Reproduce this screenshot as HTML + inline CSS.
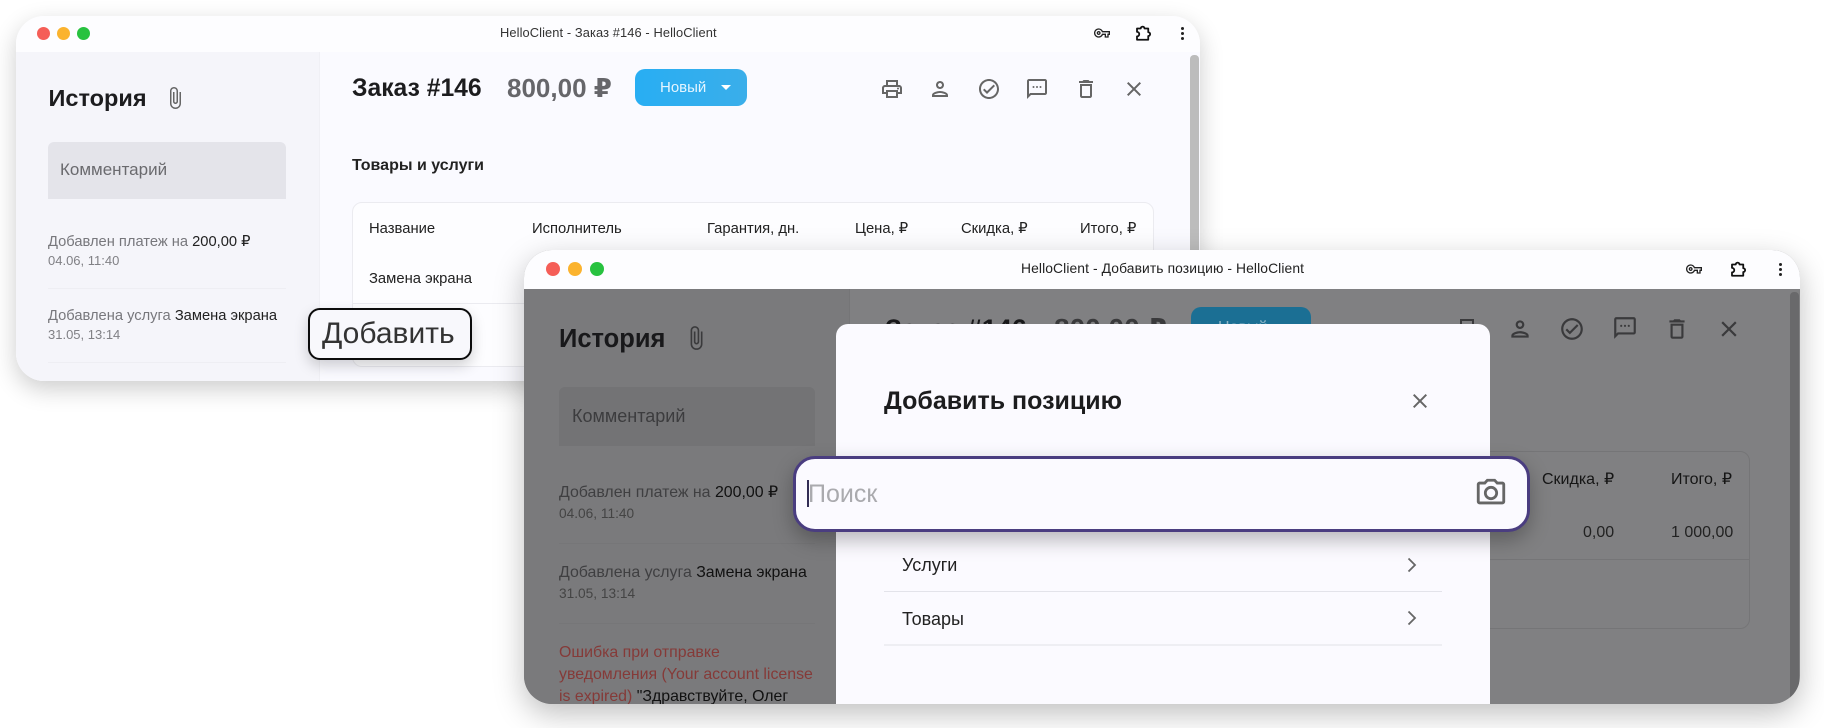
<!DOCTYPE html>
<html lang="ru">
<head>
<meta charset="utf-8">
<title>HelloClient</title>
<style>
html,body{margin:0;padding:0;background:#fff}
body{width:1824px;height:728px;overflow:hidden;position:relative;font-family:"Liberation Sans","DejaVu Sans",sans-serif}
.l{position:absolute;left:0;top:0;width:1824px;height:728px}
.b{position:absolute;box-sizing:border-box}
.t{position:absolute;white-space:nowrap;line-height:20px;height:20px}
svg{position:absolute;overflow:visible}
.w1{clip-path:inset(16px 624px 347px 16px round 28px)}
.w2{clip-path:inset(250px 24px 24px 524px round 28px)}
.s1{font-size:14.8px;color:#222}
.h2{font-size:16px;color:#151515}
</style>
</head>
<body>

<!-- window 1 -->
<div class="b" style="left:16px;top:16px;width:1184px;height:365px;border-radius:28px;box-shadow:0 8px 24px rgba(0,0,0,.2)"></div>
<div class="l w1">
  <div class="b" style="left:16px;top:16px;width:1184px;height:365px;background:#fafaff"></div>
  <div class="b" style="left:16px;top:16px;width:1184px;height:36px;background:#fdfdff"></div>
  <div class="b" style="left:16px;top:52px;width:304px;height:329px;background:#f5f5fa;border-right:1px solid #f0f0f5"></div>
  <div class="b" style="left:37px;top:26.5px;width:13px;height:13px;border-radius:50%;background:#f55e57"></div>
  <div class="b" style="left:57px;top:26.5px;width:13px;height:13px;border-radius:50%;background:#fbb32e"></div>
  <div class="b" style="left:77px;top:26.5px;width:13px;height:13px;border-radius:50%;background:#28c23f"></div>
  <div class="t" style="left:500px;top:23px;font-size:12.85px;color:#333;letter-spacing:.1px">HelloClient - Заказ #146 - HelloClient</div>
  <!-- chrome icons -->
  <svg style="left:1094px;top:25px" width="16" height="16" viewBox="0 0 24 24" fill="#222"><path d="M22 19h-6v-4h-2.68c-1.14 2.42-3.6 4-6.32 4-3.86 0-7-3.14-7-7s3.14-7 7-7c2.72 0 5.17 1.58 6.32 4H24v6h-2v4zm-4-2h2v-4h2v-2H11.94l-.23-.67C11.01 8.34 9.11 7 7 7c-2.76 0-5 2.24-5 5s2.24 5 5 5c2.11 0 4.01-1.34 4.71-3.33l.23-.67H18v4zM7 15c-1.65 0-3-1.35-3-3s1.35-3 3-3 3 1.35 3 3-1.35 3-3 3zm0-4c-.55 0-1 .45-1 1s.45 1 1 1 1-.45 1-1-.45-1-1-1z"/></svg>
  <svg style="left:1134px;top:24px" width="18" height="18" viewBox="0 0 24 24" fill="none" stroke="#111" stroke-width="2.4" stroke-linejoin="round"><path d="M4 6h5a2.5 2.5 0 0 1 5 0h5v5a2.5 2.5 0 0 1 0 5v5H4v-4.5a3 3 0 0 0 0-6z"/></svg>
  <div class="b" style="left:1181px;top:27px;width:3px;height:3px;border-radius:50%;background:#222"></div>
  <div class="b" style="left:1181px;top:32px;width:3px;height:3px;border-radius:50%;background:#222"></div>
  <div class="b" style="left:1181px;top:37px;width:3px;height:3px;border-radius:50%;background:#222"></div>
  <!-- sidebar -->
  <div class="t" style="left:48.5px;top:88px;font-size:23.5px;font-weight:700;color:#1c1c1e;line-height:20px">История</div>
  <svg style="left:163px;top:86px" width="24" height="24" viewBox="0 0 24 24" fill="#666"><path d="M16.5 6v11.5c0 2.21-1.79 4-4 4s-4-1.79-4-4V5c0-1.38 1.12-2.5 2.5-2.5s2.5 1.12 2.5 2.5v10.5c0 .55-.45 1-1 1s-1-.45-1-1V6H10v9.5c0 1.38 1.12 2.5 2.5 2.5s2.5-1.12 2.5-2.5V5c0-2.21-1.79-4-4-4S7 2.79 7 5v12.5c0 3.04 2.46 5.5 5.5 5.5s5.5-2.46 5.5-5.5V6h-1.5z"/></svg>
  <div class="b" style="left:48px;top:142px;width:238px;height:57px;background:#e4e4ea;border-radius:6px 6px 0 0"></div>
  <div class="t" style="left:60px;top:160px;font-size:17px;color:#6a6a6e">Комментарий</div>
  <div class="t" style="left:48px;top:232px;font-size:14.7px;color:#77777c">Добавлен платеж на <span style="color:#222">200,00 ₽</span></div>
  <div class="t" style="left:48px;top:251px;font-size:13px;color:#808085">04.06, 11:40</div>
  <div class="b" style="left:48px;top:288px;width:238px;height:1px;background:#eeeef3"></div>
  <div class="t" style="left:48px;top:306px;font-size:14.7px;color:#77777c">Добавлена услуга <span style="color:#222">Замена экрана</span></div>
  <div class="t" style="left:48px;top:325px;font-size:13px;color:#808085">31.05, 13:14</div>
  <div class="b" style="left:48px;top:362px;width:238px;height:1px;background:#eeeef3"></div>
  <!-- main -->
  <div class="t" style="left:352px;top:79px;font-size:24.7px;font-weight:700;color:#1c1c1e">Заказ #146</div>
  <div class="t" style="left:507px;top:78px;font-size:26px;font-weight:700;color:#66666a">800,00 ₽</div>
  <div class="b" style="left:635px;top:69px;width:112px;height:37px;border-radius:10px;background:linear-gradient(90deg,#28aef3,#3aaeea)"></div>
  <div class="t" style="left:660px;top:77.5px;font-size:15px;color:#e4f5ff">Новый</div>
  <div class="b" style="left:721px;top:85px;width:0;height:0;border-left:5px solid transparent;border-right:5px solid transparent;border-top:5px solid #fff"></div>
  <svg style="left:880px;top:77px" width="24" height="24" viewBox="0 0 24 24" fill="#666"><path d="M19 8h-1V3H6v5H5c-1.66 0-3 1.34-3 3v6h4v4h12v-4h4v-6c0-1.66-1.34-3-3-3zM8 5h8v3H8V5zm8 12v2H8v-4h8v2zm2-2v-2H6v2H4v-4c0-.55.45-1 1-1h14c.55 0 1 .45 1 1v4h-2z"/><circle cx="18" cy="11.5" r="1"/></svg>
  <svg style="left:928px;top:77px" width="24" height="24" viewBox="0 0 24 24" fill="#666"><path d="M12 6c1.1 0 2 .9 2 2s-.9 2-2 2-2-.9-2-2 .9-2 2-2m0 10c2.7 0 5.8 1.29 6 2H6c.23-.72 3.31-2 6-2m0-12C9.79 4 8 5.79 8 8s1.79 4 4 4 4-1.79 4-4-1.79-4-4-4zm0 10c-2.67 0-8 1.34-8 4v2h16v-2c0-2.66-5.33-4-8-4z"/></svg>
  <svg style="left:977px;top:77px" width="24" height="24" viewBox="0 0 24 24" fill="#666"><path d="M12 2C6.48 2 2 6.48 2 12s4.48 10 10 10 10-4.48 10-10S17.52 2 12 2zm0 18c-4.41 0-8-3.59-8-8s3.59-8 8-8 8 3.59 8 8-3.59 8-8 8zm4.59-12.42L10 14.17l-2.59-2.58L6 13l4 4 8-8z"/></svg>
  <svg style="left:1025px;top:77px" width="24" height="24" viewBox="0 0 24 24" fill="#666"><path d="M20 2H4c-1.1 0-2 .9-2 2v18l4-4h14c1.1 0 2-.9 2-2V4c0-1.1-.9-2-2-2zm0 14H5.17L4 17.17V4h16v12z"/><circle cx="8.5" cy="10" r="1"/><circle cx="12" cy="10" r="1"/><circle cx="15.5" cy="10" r="1"/></svg>
  <svg style="left:1074px;top:77px" width="24" height="24" viewBox="0 0 24 24" fill="#666"><path d="M6 19c0 1.1.9 2 2 2h8c1.1 0 2-.9 2-2V7H6v12zM8 9h8v10H8V9zm7.5-5l-1-1h-5l-1 1H5v2h14V4z"/></svg>
  <svg style="left:1122px;top:77px" width="24" height="24" viewBox="0 0 24 24" fill="#666"><path d="M19 6.41L17.59 5 12 10.59 6.41 5 5 6.41 10.59 12 5 17.59 6.41 19 12 13.41 17.59 19 19 17.59 13.41 12z"/></svg>
  <div class="b" style="left:1190px;top:55px;width:9px;height:326px;border-radius:4px 4px 0 0;background:#bcbcbc"></div>
  <div class="t" style="left:352px;top:156px;font-size:16px;font-weight:700;color:#222">Товары и услуги</div>
  <div class="b" style="left:352px;top:202px;width:802px;height:165px;border:1px solid #ebebf0;border-radius:10px;background:#fdfdff"></div>
  <div class="t s1" style="left:369px;top:219px">Название</div>
  <div class="t s1" style="left:532px;top:219px">Исполнитель</div>
  <div class="t s1" style="left:707px;top:219px">Гарантия, дн.</div>
  <div class="t s1" style="left:855px;top:219px">Цена, ₽</div>
  <div class="t s1" style="left:961px;top:219px">Скидка, ₽</div>
  <div class="t s1" style="left:1080px;top:219px">Итого, ₽</div>
  <div class="t s1" style="left:369px;top:269px">Замена экрана</div>
  <div class="b" style="left:352px;top:303px;width:802px;height:1px;background:#ebebf0"></div>
</div>

<!-- tooltip -->
<div class="b" style="left:308px;top:308px;width:164px;height:52px;border:2px solid #0c0c0c;border-radius:12px;background:#f8f8fc;box-shadow:0 6px 14px rgba(0,0,0,.18)"></div>
<div class="t" style="left:322px;top:314px;height:40px;line-height:40px;font-size:30px;color:#333">Добавить</div>

<!-- window 2 -->
<div class="b" style="left:524px;top:250px;width:1276px;height:454px;border-radius:28px;box-shadow:0 10px 30px rgba(0,0,0,.25)"></div>
<div class="l w2">
  <div class="b" style="left:524px;top:250px;width:1276px;height:454px;background:#808082"></div>
  <div class="b" style="left:524px;top:250px;width:1276px;height:39px;background:#fdfdff"></div>
  <div class="b" style="left:524px;top:289px;width:326px;height:415px;background:#7a7a7c;border-right:1px solid #757577"></div>
  <div class="b" style="left:546px;top:261.5px;width:14px;height:14px;border-radius:50%;background:#f55e57"></div>
  <div class="b" style="left:568px;top:261.5px;width:14px;height:14px;border-radius:50%;background:#fbb32e"></div>
  <div class="b" style="left:590px;top:261.5px;width:14px;height:14px;border-radius:50%;background:#28c23f"></div>
  <div class="t" style="left:1021px;top:258px;font-size:13.85px;color:#222;letter-spacing:.1px">HelloClient - Добавить позицию - HelloClient</div>
  <svg style="left:1686px;top:261px" width="16" height="16" viewBox="0 0 24 24" fill="#222"><path d="M22 19h-6v-4h-2.68c-1.14 2.42-3.6 4-6.32 4-3.86 0-7-3.14-7-7s3.14-7 7-7c2.72 0 5.17 1.58 6.32 4H24v6h-2v4zm-4-2h2v-4h2v-2H11.94l-.23-.67C11.01 8.34 9.11 7 7 7c-2.76 0-5 2.24-5 5s2.24 5 5 5c2.11 0 4.01-1.34 4.71-3.33l.23-.67H18v4zM7 15c-1.65 0-3-1.35-3-3s1.35-3 3-3 3 1.35 3 3-1.35 3-3 3zm0-4c-.55 0-1 .45-1 1s.45 1 1 1 1-.45 1-1-.45-1-1-1z"/></svg>
  <svg style="left:1729px;top:260px" width="18" height="18" viewBox="0 0 24 24" fill="none" stroke="#111" stroke-width="2.4" stroke-linejoin="round"><path d="M4 6h5a2.5 2.5 0 0 1 5 0h5v5a2.5 2.5 0 0 1 0 5v5H4v-4.5a3 3 0 0 0 0-6z"/></svg>
  <div class="b" style="left:1779px;top:263px;width:3px;height:3px;border-radius:50%;background:#222"></div>
  <div class="b" style="left:1779px;top:268px;width:3px;height:3px;border-radius:50%;background:#222"></div>
  <div class="b" style="left:1779px;top:273px;width:3px;height:3px;border-radius:50%;background:#222"></div>
  <!-- sidebar -->
  <div class="t" style="left:559px;top:329px;font-size:25.5px;font-weight:700;color:#18181a">История</div>
  <svg style="left:683px;top:325px" width="26" height="26" viewBox="0 0 24 24" fill="#3a3a3c"><path d="M16.5 6v11.5c0 2.21-1.79 4-4 4s-4-1.79-4-4V5c0-1.38 1.12-2.5 2.5-2.5s2.5 1.12 2.5 2.5v10.5c0 .55-.45 1-1 1s-1-.45-1-1V6H10v9.5c0 1.38 1.12 2.5 2.5 2.5s2.5-1.12 2.5-2.5V5c0-2.21-1.79-4-4-4S7 2.79 7 5v12.5c0 3.04 2.46 5.5 5.5 5.5s5.5-2.46 5.5-5.5V6h-1.5z"/></svg>
  <div class="b" style="left:559px;top:387px;width:256px;height:59px;background:#737375;border-radius:6px 6px 0 0"></div>
  <div class="t" style="left:572px;top:406px;font-size:18px;color:#3c3c3e">Комментарий</div>
  <div class="t" style="left:559px;top:483px;font-size:15.9px;color:#3f3f41">Добавлен платеж на <span style="color:#111">200,00 ₽</span></div>
  <div class="t" style="left:559px;top:504px;font-size:13.7px;color:#444">04.06, 11:40</div>
  <div class="b" style="left:559px;top:543px;width:256px;height:1px;background:#767678"></div>
  <div class="t" style="left:559px;top:563px;font-size:15.9px;color:#3f3f41">Добавлена услуга <span style="color:#111">Замена экрана</span></div>
  <div class="t" style="left:559px;top:584px;font-size:13.7px;color:#444">31.05, 13:14</div>
  <div class="b" style="left:559px;top:623px;width:256px;height:1px;background:#767678"></div>
  <div class="t" style="left:559px;top:643px;font-size:15.9px;color:#853a38">Ошибка при отправке</div>
  <div class="t" style="left:559px;top:665px;font-size:15.9px;color:#853a38">уведомления (Your account license</div>
  <div class="t" style="left:559px;top:687px;font-size:15.9px;color:#853a38">is expired) <span style="color:#111">"Здравствуйте, Олег</span></div>
  <!-- main behind modal -->
  <div class="t" style="left:885px;top:314px;height:30px;line-height:30px;font-size:27px;font-weight:700;color:#18181a">Заказ #146</div>
  <div class="t" style="left:1054px;top:314px;height:30px;line-height:30px;font-size:28px;font-weight:700;color:#3a3a3c">800,00 ₽</div>
  <div class="b" style="left:1191px;top:307px;width:120px;height:40px;border-radius:10px;background:#1b6f94"></div>
  <div class="t" style="left:1218px;top:318px;font-size:16px;color:#8fb6c8">Новый</div>
  <div class="b" style="left:1460px;top:319px;width:14px;height:8px;border:2px solid #3a3a3c;border-bottom:0"></div>
  <svg style="left:1507px;top:316px" width="26" height="26" viewBox="0 0 24 24" fill="#3a3a3c"><path d="M12 6c1.1 0 2 .9 2 2s-.9 2-2 2-2-.9-2-2 .9-2 2-2m0 10c2.7 0 5.8 1.29 6 2H6c.23-.72 3.31-2 6-2m0-12C9.79 4 8 5.79 8 8s1.79 4 4 4 4-1.79 4-4-1.79-4-4-4zm0 10c-2.67 0-8 1.34-8 4v2h16v-2c0-2.66-5.33-4-8-4z"/></svg>
  <svg style="left:1559px;top:316px" width="26" height="26" viewBox="0 0 24 24" fill="#3a3a3c"><path d="M12 2C6.48 2 2 6.48 2 12s4.48 10 10 10 10-4.48 10-10S17.52 2 12 2zm0 18c-4.41 0-8-3.59-8-8s3.59-8 8-8 8 3.59 8 8-3.59 8-8 8zm4.59-12.42L10 14.17l-2.59-2.58L6 13l4 4 8-8z"/></svg>
  <svg style="left:1612px;top:315px" width="26" height="26" viewBox="0 0 24 24" fill="#3a3a3c"><path d="M20 2H4c-1.1 0-2 .9-2 2v18l4-4h14c1.1 0 2-.9 2-2V4c0-1.1-.9-2-2-2zm0 14H5.17L4 17.17V4h16v12z"/><circle cx="8.5" cy="10" r="1"/><circle cx="12" cy="10" r="1"/><circle cx="15.5" cy="10" r="1"/></svg>
  <svg style="left:1664px;top:316px" width="26" height="26" viewBox="0 0 24 24" fill="#3a3a3c"><path d="M6 19c0 1.1.9 2 2 2h8c1.1 0 2-.9 2-2V7H6v12zM8 9h8v10H8V9zm7.5-5l-1-1h-5l-1 1H5v2h14V4z"/></svg>
  <svg style="left:1716px;top:316px" width="26" height="26" viewBox="0 0 24 24" fill="#3a3a3c"><path d="M19 6.41L17.59 5 12 10.59 6.41 5 5 6.41 10.59 12 5 17.59 6.41 19 12 13.41 17.59 19 19 17.59 13.41 12z"/></svg>
  <div class="b" style="left:1790px;top:292px;width:9px;height:412px;border-radius:4px 4px 0 0;background:#69696b"></div>
  <div class="b" style="left:900px;top:451px;width:850px;height:178px;border:1px solid #757577;border-radius:10px"></div>
  <div class="t h2" style="left:1542px;top:470px">Скидка, ₽</div>
  <div class="t h2" style="left:1671px;top:470px">Итого, ₽</div>
  <div class="t h2" style="left:1583px;top:523px;color:#222">0,00</div>
  <div class="t h2" style="left:1671px;top:523px;color:#222">1 000,00</div>
  <div class="b" style="left:900px;top:559px;width:850px;height:1px;background:#757577"></div>
  <!-- modal -->
  <div class="b" style="left:836px;top:324px;width:654px;height:400px;border-radius:12px;background:#fbfaff"></div>
  <div class="t" style="left:884px;top:386px;height:30px;line-height:30px;font-size:25px;font-weight:700;color:#1c1c1e">Добавить позицию</div>
  <svg style="left:1408px;top:389px" width="24" height="24" viewBox="0 0 24 24" fill="#666"><path d="M19 6.41L17.59 5 12 10.59 6.41 5 5 6.41 10.59 12 5 17.59 6.41 19 12 13.41 17.59 19 19 17.59 13.41 12z"/></svg>
  <div class="t" style="left:902px;top:555px;font-size:18px;color:#222">Услуги</div>
  <svg style="left:1405px;top:556px" width="14" height="18" viewBox="0 0 14 18" fill="none" stroke="#666" stroke-width="1.8"><path d="M3.5 2.5L10 9l-6.5 6.5"/></svg>
  <div class="b" style="left:884px;top:591px;width:558px;height:1px;background:#e3e3ea"></div>
  <div class="t" style="left:902px;top:609px;font-size:18px;color:#222">Товары</div>
  <svg style="left:1405px;top:609px" width="14" height="18" viewBox="0 0 14 18" fill="none" stroke="#666" stroke-width="1.8"><path d="M3.5 2.5L10 9l-6.5 6.5"/></svg>
  <div class="b" style="left:884px;top:644px;width:558px;height:2px;background:#eeeef3"></div>
  <!-- search -->
  <div class="b" style="left:793px;top:456px;width:737px;height:76px;border:3px solid #4a3d80;border-radius:22px;background:#fbfaff;box-shadow:0 8px 20px rgba(0,0,0,.28)"></div>
  <div class="b" style="left:807px;top:480px;width:2px;height:27px;background:#332d55"></div>
  <div class="t" style="left:808px;top:479px;height:30px;line-height:30px;font-size:25px;color:#aaaaae">Поиск</div>
  <svg style="left:1474px;top:476px" width="34" height="34" viewBox="0 0 24 24" fill="#666"><path d="M20 4h-3.17L15 2H9L7.17 4H4c-1.1 0-2 .9-2 2v12c0 1.1.9 2 2 2h16c1.1 0 2-.9 2-2V6c0-1.1-.9-2-2-2zm0 14H4V6h4.05l1.83-2h4.24l1.83 2H20v12zM12 7c-2.76 0-5 2.24-5 5s2.24 5 5 5 5-2.24 5-5-2.24-5-5-5zm0 8c-1.65 0-3-1.35-3-3s1.35-3 3-3 3 1.35 3 3-1.35 3-3 3z"/></svg>
</div>
</body>
</html>
